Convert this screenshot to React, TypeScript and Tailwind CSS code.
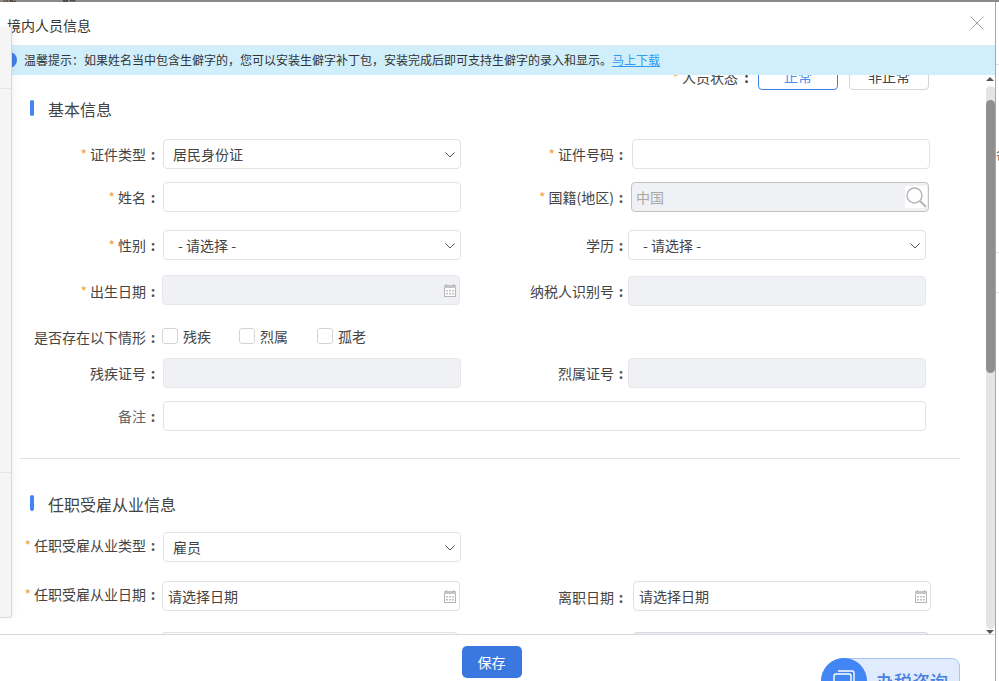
import React from "react";

const FONT = "[font-family:'Noto_Sans_CJK_SC','Liberation_Sans',sans-serif]";

function Chevron() {
  return (
    <svg width="10" height="6" viewBox="0 0 10 6" className="absolute right-[5px] top-[12px]" fill="none">
      <path d="M0.5 0.5L5 5L9.5 0.5" stroke="#555" strokeWidth="1" />
    </svg>
  );
}

function Calendar() {
  return (
    <svg width="12" height="13" viewBox="0 0 12 13" className="absolute right-[3px] top-[8px]" fill="none">
      <rect x="0.5" y="1.5" width="11" height="11" stroke="#b5b5b5" fill="#fff" />
      <rect x="0" y="1" width="12" height="3" fill="#c4c4c4" />
      <rect x="2" y="0" width="1" height="2" fill="#b5b5b5" />
      <rect x="9" y="0" width="1" height="2" fill="#b5b5b5" />
      <path d="M2 6h2v1.6H2zM5 6h2v1.6H5zM8 6h2v1.6H8zM2 9h2v1.6H2zM5 9h2v1.6H5zM8 9h2v1.6H8z" fill="#c0c0c0" />
    </svg>
  );
}

function Label({
  text,
  req,
  w,
  dy = 0,
  cw = 17,
  muted,
}: {
  text: string;
  req?: boolean;
  w: number;
  dy?: number;
  cw?: number;
  muted?: boolean;
}) {
  return (
    <div
      className={`flex shrink-0 items-center justify-end text-[14px] leading-[30px] ${muted ? "text-[#666]" : "text-[#444]"}`}
      style={{ width: w, transform: `translateY(${dy}px)` }}
    >
      {req && <span className="mr-[3px] text-[14px] text-[#f7a13c]">*</span>}
      <span className="whitespace-nowrap">{text}</span>
      <span className="text-center font-bold text-[#555]" style={{ width: cw, paddingRight: cw - 14 > 0 ? cw - 14 : 0 }}>
        :
      </span>
    </div>
  );
}

function Box({
  w,
  text,
  pad = 9,
  kind,
  icon,
  textCls = "text-[#444]",
}: {
  w: number;
  text?: string;
  pad?: number;
  kind?: "gray" | "dark";
  icon?: React.ReactNode;
  textCls?: string;
}) {
  const cls =
    kind === "gray"
      ? "bg-[#f0f1f5] border-[#e6e6ea]"
      : kind === "dark"
        ? "bg-[#f0f1f5] border-[#c2c2c2]"
        : "bg-white border-[#e2e2e4]";
  return (
    <div
      className={`relative h-[30px] shrink-0 rounded-[4px] border text-[14px] leading-[28px] ${textCls} ${cls}`}
      style={{ width: w, paddingLeft: pad }}
    >
      {text}
      {icon}
    </div>
  );
}

function Title({ text }: { text: string }) {
  return (
    <div className="flex h-[20px] items-center pl-[30px]">
      <span className="mb-[4px] h-[16px] w-[4px] rounded-[2px] bg-[#4285f4]" />
      <span className="mb-[2px] ml-[14px] text-[16px] text-[#444]">{text}</span>
    </div>
  );
}

function Check({ text, w }: { text: string; w: number }) {
  return (
    <div className="flex items-center text-[14px] text-[#444]" style={{ width: w }}>
      <span className="h-[16px] w-[16px] rounded-[3px] border border-[#d4d4d8] bg-white" />
      <span className="ml-[5px]">{text}</span>
    </div>
  );
}

export default function App() {
  return (
    <div className={`relative h-[681px] w-[999px] overflow-hidden bg-white ${FONT}`}>
      {/* page behind the dialog */}
      <div className="flex h-[2px] items-start overflow-hidden bg-[#8a8a8a] pl-[2px] text-[7px] leading-[2px] text-[#222]">
        <span className="w-[60px]">办税</span>
        <span className="w-[40px]">首页</span>
      </div>

      <div className="flex h-[679px] w-[996px] flex-col border-r border-[#a8a8a8] bg-white">
        {/* header */}
        <div className="flex h-[43px] shrink-0 items-center justify-between pl-[7px] pr-[11px] pt-[4px]">
          <span className="text-[14px] text-[#333]">境内人员信息</span>
          <svg width="14" height="14" viewBox="0 0 14 14" fill="none" className="mb-[5px]">
            <path d="M0.5 0.5L13.5 13.5M13.5 0.5L0.5 13.5" stroke="#a5a5a5" strokeWidth="1" />
          </svg>
        </div>

        {/* notice */}
        <div className="relative z-10 flex h-[30px] shrink-0 items-center border-t border-[#dcecf3] bg-[#d1effb] pb-[1px] pl-[24px] text-[12px] text-[#333]">
          <span className="absolute left-[1px] top-[6px] h-[16px] w-[16px] rounded-full bg-[#3f7fe8]" />
          <span>温馨提示：如果姓名当中包含生僻字的，您可以安装生僻字补丁包，安装完成后即可支持生僻字的录入和显示。</span>
          <span className="text-[#2f9bf0] underline">马上下载</span>
        </div>

        {/* scrolling body */}
        <div className="relative flex min-h-0 flex-1 overflow-hidden">
          <div className="min-w-0 flex-1">
            <div className="-mt-[13px] flex h-[28px] items-center justify-end pr-[56px]">
              <div className="flex translate-y-px items-center text-[14px] text-[#444]">
                <span className="mr-[3px] text-[14px] text-[#f7a13c]">*</span>
                <span>人员状态</span>
                <span className="w-[20px] pr-[3px] text-center font-bold">:</span>
              </div>
              <div className="h-[28px] w-[80px] rounded-[4px] border border-[#3b82ea] text-center text-[14px] leading-[26px] text-[#4a90f0]">正常</div>
              <div className="ml-[11px] h-[28px] w-[80px] rounded-[4px] border border-[#d6d6da] text-center text-[14px] leading-[26px] text-[#444]">非正常</div>
            </div>

            <div className="mt-[10px]">
              <Title text="基本信息" />
            </div>

            <div className="mt-[19px] flex">
              <Label text="证件类型" req w={163} />
              <Box w={298} text="居民身份证" icon={<Chevron />} />
              <Label text="证件号码" req w={171} cw={18} />
              <Box w={298} />
            </div>
            <div className="mt-[13px] flex">
              <Label text="姓名" req w={163} />
              <Box w={298} />
              <Label text="国籍(地区)" req w={170} />
              <Box
                w={298}
                pad={4}
                kind="dark"
                text="中国"
                textCls="text-[#a8a8a8]"
                icon={
                  <span className="absolute right-[1px] top-[3px] flex h-[22px] w-[22px] items-center justify-center bg-white">
                    <svg width="22" height="22" viewBox="0 0 22 22" fill="none">
                      <circle cx="9.5" cy="9.5" r="7.5" stroke="#b4b4b4" strokeWidth="1.4" />
                      <path d="M15 15L21 21" stroke="#b4b4b4" strokeWidth="2" />
                    </svg>
                  </span>
                }
              />
            </div>
            <div className="mt-[18px] flex">
              <Label text="性别" req w={163} />
              <Box w={298} pad={14} text="- 请选择 -" icon={<Chevron />} />
              <Label text="学历" w={167} cw={14} />
              <Box w={298} pad={14} text="- 请选择 -" icon={<Chevron />} />
            </div>
            <div className="mt-[15px] flex">
              <Label text="出生日期" req w={162} cw={16} />
              <Box w={298} kind="gray" icon={<Calendar />} />
              <Label text="纳税人识别号" w={168} cw={14} />
              <div className="mt-[1px]">
                <Box w={298} kind="gray" />
              </div>
            </div>
            <div className="mt-[19px] -mb-[1px] flex h-[30px] items-start">
              <div className="h-[24px] overflow-hidden">
                <div className="-mt-[4px]">
                  <Label text="是否存在以下情形" w={162} dy={1} cw={16} />
                </div>
              </div>
              <div className="flex h-[22px] items-center">
                <Check text="残疾" w={77} />
                <Check text="烈属" w={78} />
                <Check text="孤老" w={60} />
              </div>
            </div>
            <div className="mt-[4px] flex">
              <Label text="残疾证号" w={163} />
              <Box w={298} kind="gray" />
              <Label text="烈属证号" w={167} cw={14} />
              <Box w={298} kind="gray" />
            </div>
            <div className="mt-[13px] flex">
              <Label text="备注" w={163} muted />
              <Box w={763} />
            </div>
            <div className="ml-[20px] mt-[27px] h-px w-[940px] bg-[#e2e2e4]" />
            <div className="mt-[36px]">
              <Title text="任职受雇从业信息" />
            </div>
            <div className="mt-[17px] flex">
              <Label text="任职受雇从业类型" req w={163} dy={-2} />
              <Box w={298} text="雇员" icon={<Chevron />} />
            </div>
            <div className="mt-[19px] flex">
              <Label text="任职受雇从业日期" req w={162} dy={-2} cw={16} />
              <Box w={298} pad={5} text="请选择日期" icon={<Calendar />} />
              <Label text="离职日期" w={173} dy={1} cw={19} />
              <Box w={298} pad={5} text="请选择日期" icon={<Calendar />} />
            </div>
            <div className="mt-[21px] flex">
              <div className="ml-[161px] h-[30px] w-[297px] rounded-[4px] border border-[#e2e2e4] bg-[#fafafa]" />
              <div className="ml-[175px] h-[30px] w-[296px] rounded-[4px] border border-[#d8d8de] bg-[#f0f1f5]" />
            </div>
          </div>

          {/* scrollbar */}
          <div className="flex w-[10px] shrink-0 flex-col items-center">
            <div className="mt-[2px] h-0 w-0 border-x-[4px] border-b-[4px] border-x-transparent border-b-[#555]" />
            <div className="mt-[5px] flex h-[544px] w-[9px] flex-col rounded-[5px] bg-[#e4e4e4]">
              <div className="mt-[14px] h-[273px] w-[9px] rounded-[5px] bg-[#8f8f8f]" />
            </div>
            <div className="mt-[1px] h-0 w-0 border-x-[4px] border-t-[4px] border-x-transparent border-t-[#555]" />
          </div>
        </div>

        {/* footer */}
        <div className="flex h-[47px] shrink-0 justify-center border-t border-[#d8d8de] bg-white pr-[12px]">
          <button className="mt-[11px] h-[32px] w-[60px] rounded-[5px] bg-[#3a78e0] text-[14px] text-white">保存</button>
        </div>
      </div>

      {/* strays of the page behind, right of the dialog */}
      <div className="absolute right-0 top-[64px] h-px w-[3px] bg-[#ddd]" />
      <div className="absolute right-0 top-[252px] h-px w-[3px] bg-[#ddd]" />
      <div className="absolute right-0 top-[292px] h-px w-[3px] bg-[#ddd]" />
      <div className="absolute left-[996px] top-[146px] w-[3px] overflow-hidden text-[12px] text-[#444]">各</div>

      {/* left sheet lying over the dialog */}
      <div className="absolute left-0 top-[27px] z-20 h-[591px] w-[12px] rounded-br-[3px] border-r border-b border-[#d9d9d9] bg-[#f5f5f5] shadow-[2px_0_5px_rgba(0,0,0,0.06)]">
        <div className="mt-[61px] h-px w-full bg-[#e6e6e6]" />
        <div className="mt-[383px] h-px w-full bg-[#e6e6e6]" />
      </div>

      {/* floating consult button */}
      <div className="absolute left-[821px] top-[658px] flex h-[46px] w-[139px] items-center rounded-l-[23px] rounded-r-[8px] border border-[#a9c4f0] bg-[#e0ecfd]">
        <div className="-ml-px flex h-[46px] w-[46px] items-start justify-center rounded-full bg-[#4285f4] pt-[12px]">
          <svg width="22" height="20" viewBox="0 0 22 20" fill="none">
            <rect x="1" y="4" width="17" height="15" rx="2" stroke="#fff" strokeWidth="1.4" />
            <path d="M5 1h14a2 2 0 0 1 2 2v10" stroke="#fff" strokeWidth="1.4" />
          </svg>
        </div>
        <span className="ml-[9px] whitespace-nowrap text-[18px] font-medium text-[#4a80e0]">办税咨询</span>
      </div>
    </div>
  );
}
